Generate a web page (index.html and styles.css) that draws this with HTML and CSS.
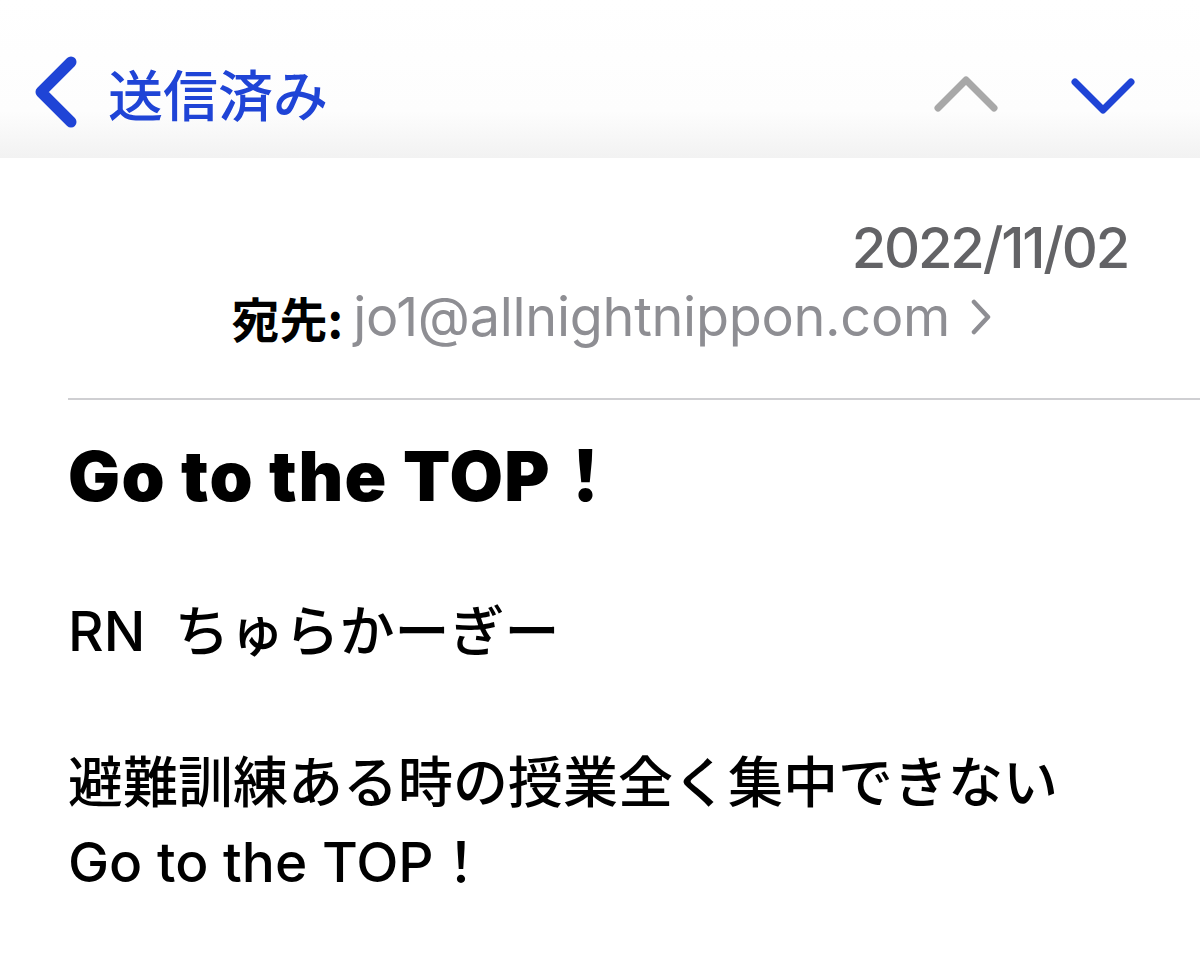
FILE: index.html
```html
<!DOCTYPE html>
<html lang="ja">
<head>
<meta charset="utf-8">
<title>送信済み</title>
<link rel="stylesheet" href="styles.css">
</head>
<body>
<div class="screen">
  <header class="nav">
    <div class="nav-left">
      <svg class="back" width="44" height="72" viewBox="0 0 44 72"><path d="M37 6 L7 36 L37 66" fill="none" stroke="#1f44d6" stroke-width="11" stroke-linecap="round" stroke-linejoin="round"/></svg>
      <span class="nav-title">送信済み</span>
    </div>
    <div class="nav-right">
      <svg class="arrow" width="64" height="40" viewBox="0 0 64 40"><path d="M4 32 L32 4 L60 32" fill="none" stroke="#a8a8a8" stroke-width="7" stroke-linecap="round" stroke-linejoin="round"/></svg>
      <svg class="arrow" width="64" height="40" viewBox="0 0 64 40"><path d="M4 6 L32 34 L60 6" fill="none" stroke="#1f44d6" stroke-width="7" stroke-linecap="round" stroke-linejoin="round"/></svg>
    </div>
  </header>
  <section class="meta">
    <div class="date">2022/11/02</div>
    <div class="to"><span class="to-label">宛先:</span><span class="to-addr">jo1@allnightnippon.com</span><svg class="to-chev" width="22" height="36" viewBox="0 0 22 36"><path d="M4 3 L18 18 L4 33" fill="none" stroke="#8e8e93" stroke-width="4.5" stroke-linecap="round" stroke-linejoin="round"/></svg></div>
  </section>
  <div class="divider"></div>
  <main class="content">
    <h1 class="subject">Go to the TOP！</h1>
    <p class="line rn">RN&nbsp;&nbsp;ちゅらかーぎー</p>
    <p class="line body">避難訓練ある時の授業全く集中できない<br>Go to the TOP！</p>
  </main>
</div>
</body>
</html>
```

FILE: styles.css
```css
html, body {
  margin: 0;
  padding: 0;
  background: #ffffff;
}
body {
  font-family: Inter, "Noto Sans CJK JP", sans-serif;
  color: #000;
}
.screen {
  width: 1200px;
  height: 958px;
  overflow: hidden;
  background: #fff;
}
.nav {
  height: 158px;
  display: flex;
  justify-content: space-between;
  align-items: flex-start;
  background: linear-gradient(to bottom, #ffffff 0%, #fdfdfd 70%, #f2f2f2 100%);
}
.nav-left {
  display: flex;
  align-items: center;
  margin-top: 56px;
  margin-left: 34px;
}
.back {
  display: block;
}
.nav-title {
  margin-left: 30px;
  font-family: "Noto Sans CJK JP", sans-serif;
  font-weight: 500;
  font-size: 55px;
  line-height: 72px;
  color: #1f44d6;
}
.nav-right {
  display: flex;
  gap: 73px;
  margin-top: 76px;
  margin-right: 65px;
}
.arrow {
  display: block;
}
.meta {
  padding-top: 56px;
  padding-right: 72px;
  display: flex;
  flex-direction: column;
  align-items: flex-end;
}
.date {
  font-size: 56px;
  line-height: 68px;
  font-weight: 500;
  color: #636366;
  letter-spacing: -2.2px;
}
.to {
  display: flex;
  align-items: center;
  margin-right: 136px;
  font-size: 54px;
  line-height: 70px;
}
.to-label {
  font-family: "Noto Sans CJK JP", sans-serif;
  font-weight: 700;
  color: #000;
  font-size: 48px;
}
.to-addr {
  margin-left: 10px;
  color: #8e8e93;
  font-weight: 400;
  letter-spacing: -0.3px;
}
.to-chev {
  display: block;
  margin-left: 20px;
}
.divider {
  margin-top: 46px;
  margin-left: 68px;
  height: 2px;
  background: #cfcfd2;
}
.content {
  padding-left: 68px;
}
.subject {
  margin: 36px 0 0 0;
  font-size: 69px;
  line-height: 80px;
  font-weight: 900;
  letter-spacing: 1.4px;
}
.line {
  margin: 0;
  font-size: 55px;
  font-weight: 500;
}
.rn {
  margin-top: 80px;
  line-height: 70px;
}
.body {
  margin-top: 76px;
  line-height: 80px;
}
```
